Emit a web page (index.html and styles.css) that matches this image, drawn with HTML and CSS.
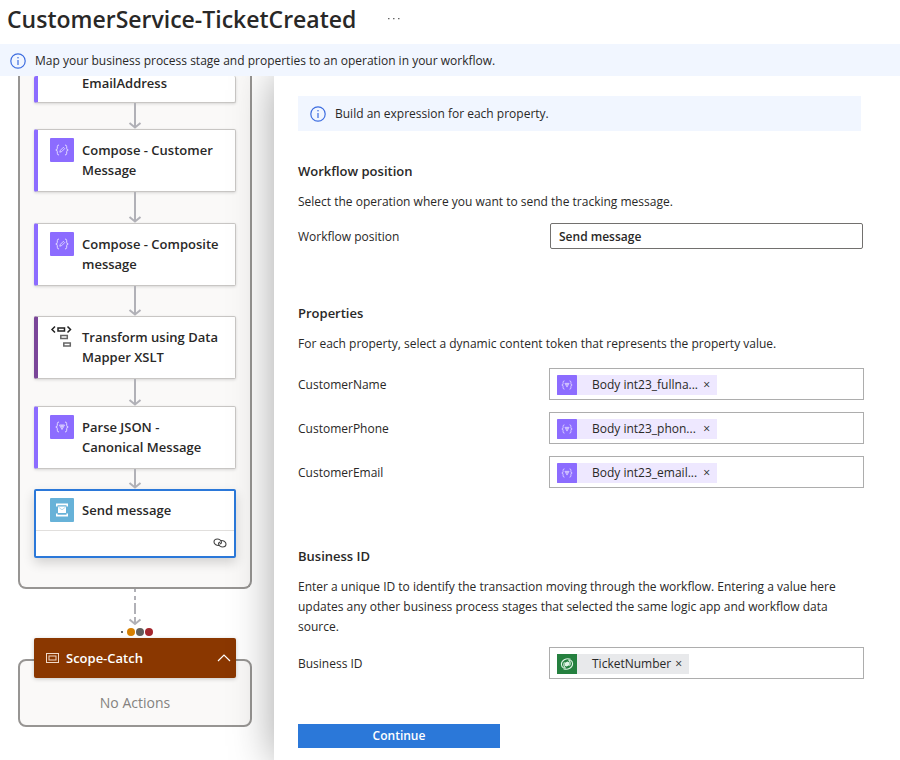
FILE: index.html
```html
<!DOCTYPE html>
<html lang="en">
<head>
<meta charset="utf-8">
<title>CustomerService-TicketCreated</title>
<link rel="stylesheet" href="styles.css">
</head>
<body>
<svg class="defs" aria-hidden="true">
  <symbol id="info" viewBox="0 0 16 16"><circle cx="8" cy="8" r="7.2" fill="none" stroke="#3d6de0" stroke-width="1.2"/><path d="M8 7v5" stroke="#3d6de0" stroke-width="1.2"/><circle cx="8" cy="4.8" r=".8" fill="#3d6de0"/></symbol>
  <symbol id="compose" viewBox="0 0 24 24"><rect width="24" height="24" rx="1" fill="#8c6cff"/><path d="M9 7q-1.700 0-1.700 1.700v1.600q0 1.700-1.500 1.700 1.500 0 1.500 1.700v1.600q0 1.700 1.700 1.700M15 7q1.700 0 1.700 1.700v1.600q0 1.700 1.500 1.700-1.500 0-1.500 1.700v1.600q0 1.700-1.700 1.700" fill="none" stroke="#ebe5ff" stroke-width=".9"/><path d="M9.800 14.200l.6-1.900 3-3 1.300 1.300-3 3z" fill="none" stroke="#ebe5ff" stroke-width=".8"/></symbol>
  <symbol id="parse" viewBox="0 0 24 24"><rect width="24" height="24" rx="1" fill="#8c6cff"/><path d="M9 7q-1.700 0-1.700 1.700v1.600q0 1.700-1.500 1.700 1.500 0 1.500 1.700v1.600q0 1.700 1.700 1.700M15 7q1.700 0 1.700 1.700v1.600q0 1.700 1.500 1.700-1.500 0-1.500 1.700v1.600q0 1.700-1.700 1.700" fill="none" stroke="#ebe5ff" stroke-width=".9"/><path d="M9.500 10h5L12 14.500zM11 10l1 2.500 1-2.500" fill="none" stroke="#ebe5ff" stroke-width=".8"/></symbol>
</svg>

<header class="page-header">
  <h1>CustomerService-TicketCreated</h1>
  <button class="more" type="button" aria-label="More"><svg width="12" height="2" viewBox="0 0 12 2"><path d="M0 .5h1.500M5 .5h1.500M10 .5h1.500" stroke="#666" stroke-width="1.300"/></svg></button>
</header>
<div class="banner">
  <svg width="16" height="16"><use href="#info"/></svg>
  <span>Map your business process stage and properties to an operation in your workflow.</span>
</div>

<div class="workspace">
  <section class="canvas">
    <div class="scope">
      <div class="card card-cut"><h3>EmailAddress</h3></div>
      <svg class="edge" width="14" height="26" viewBox="0 0 14 26"><path d="M7 0v24M1.500 20l5.500 4.500 5.500-4.500"/></svg>
      <div class="card"><svg width="24" height="24"><use href="#compose"/></svg><h3>Compose - Customer Message</h3></div>
      <svg class="edge" width="14" height="31" viewBox="0 0 14 31"><path d="M7 0v29M1.500 25l5.500 4.500 5.500-4.500"/></svg>
      <div class="card"><svg width="24" height="24"><use href="#compose"/></svg><h3>Compose - Composite message</h3></div>
      <svg class="edge" width="14" height="30" viewBox="0 0 14 30"><path d="M7 0v28M1.500 24l5.500 4.500 5.500-4.500"/></svg>
      <div class="card card-mapper">
        <svg width="24" height="24" viewBox="0 0 24 24" fill="none" stroke-width="1.500"><path d="M5 1.500L2 4.500l3 3M17.500 1.500l3 3-3 3" stroke="#222"/><rect x="8" y="3" width="6.500" height="3" stroke="#222"/><rect x="10.800" y="10.500" width="6.500" height="3" stroke="#666"/><rect x="13.800" y="18" width="6.500" height="3" stroke="#666"/></svg>
        <h3>Transform using Data Mapper XSLT</h3>
      </div>
      <svg class="edge" width="14" height="27" viewBox="0 0 14 27"><path d="M7 0v25M1.500 21l5.500 4.500 5.500-4.500"/></svg>
      <div class="card"><svg width="24" height="24"><use href="#parse"/></svg><h3>Parse JSON - Canonical Message</h3></div>
      <svg class="edge" width="14" height="20" viewBox="0 0 14 20"><path d="M7 0v18M1.500 14l5.500 4.500 5.500-4.500"/></svg>
      <div class="card card-selected">
        <div class="card-main">
          <svg width="24" height="24" viewBox="0 0 24 24"><rect width="24" height="24" rx="1" fill="#67b2d8"/><path d="M6 5.500h12v3h-1.500V7.200h-9v1.300H6zM6 18.500h12v-3h-1.500v1.300h-9v-1.300H6z" fill="#fff"/><rect x="8" y="8.500" width="8" height="6.500" rx=".5" fill="#fff"/><path d="M8.500 9.200l3.500 2.600 3.500-2.600" fill="none" stroke="#9fcde6" stroke-width=".8"/></svg>
          <h3>Send message</h3>
        </div>
        <div class="card-foot">
          <svg width="14" height="10" viewBox="0 0 14 10" fill="none" stroke="#444" stroke-width="1.100"><path d="M6.500 7.300C4 8 1 6.200 1 4s2-3 3.500-3 4 1.200 4 3.200c0 .9-.7 1.700-1.800 1.700"/><path d="M7.500 2.700C10 2 13 3.800 13 6s-2 3-3.500 3-4-1.200-4-3.200c0-.9.700-1.700 1.800-1.700"/></svg>
        </div>
      </div>
    </div>
    <svg class="edge" width="14" height="37" viewBox="0 0 14 37"><path d="M7 0v3M7 7v4M7 14v11M7 28v6M1.500 30.500l5.500 4.500 5.500-4.500"/></svg>
    <div class="dots"><i class="tiny"></i><i class="amber"></i><i class="gray"></i><i class="red"></i></div>
    <div class="catch">
      <div class="catch-head">
        <svg width="13" height="10" viewBox="0 0 13 10" fill="none" stroke="#f0d8c8"><rect x=".5" y=".5" width="12" height="9"/><rect x="3" y="3" width="7" height="4"/></svg>
        <h3>Scope-Catch</h3>
        <button type="button" aria-label="Collapse"><svg width="14" height="8" viewBox="0 0 14 8"><path d="M1 7l6-6 6 6" fill="none" stroke="#fff" stroke-width="1.200"/></svg></button>
      </div>
      <p>No Actions</p>
    </div>
  </section>

  <form class="panel">
    <div class="hint"><svg width="16" height="16"><use href="#info"/></svg><span>Build an expression for each property.</span></div>

    <section class="group group-position">
      <h2>Workflow position</h2>
      <p>Select the operation where you want to send the tracking message.</p>
      <div class="row">
        <label for="position">Workflow position</label>
        <input class="text" id="position" type="text" value="Send message">
      </div>
    </section>

    <section class="group group-properties">
      <h2>Properties</h2>
      <p>For each property, select a dynamic content token that represents the property value.</p>
      <div class="row">
        <label for="name">CustomerName</label>
        <div class="tokens"><span class="token"><svg width="20" height="20"><use href="#parse"/></svg><span class="token-name">Body int23_fullna...</span><button type="button" aria-label="Remove">×</button></span><input id="name" type="text"></div>
      </div>
      <div class="row">
        <label for="phone">CustomerPhone</label>
        <div class="tokens"><span class="token"><svg width="20" height="20"><use href="#parse"/></svg><span class="token-name">Body int23_phon...</span><button type="button" aria-label="Remove">×</button></span><input id="phone" type="text"></div>
      </div>
      <div class="row">
        <label for="email">CustomerEmail</label>
        <div class="tokens"><span class="token"><svg width="20" height="20"><use href="#parse"/></svg><span class="token-name">Body int23_email...</span><button type="button" aria-label="Remove">×</button></span><input id="email" type="text"></div>
      </div>
    </section>

    <section class="group group-business">
      <h2>Business ID</h2>
      <p>Enter a unique ID to identify the transaction moving through the workflow. Entering a value here updates any other business process stages that selected the same logic app and workflow data source.</p>
      <div class="row">
        <label for="business">Business ID</label>
        <div class="tokens"><span class="token token-gray"><svg width="20" height="20" viewBox="0 0 20 20"><rect width="20" height="20" fill="#25803f"/><g fill="none" stroke="#dff3e4" stroke-width="1.100"><path d="M13.500 5.300C9 3.600 4.400 6.600 4.400 10.300c0 1.900.9 3 2.300 3.700"/><path d="M6.500 14.700c4.500 1.700 9.100-1.300 9.100-5 0-1.900-.9-3-2.300-3.700"/><path d="M8.500 14.200C6.700 13 6.300 10.200 7.500 8.400M11.500 5.800c1.800 1.200 2.200 4 1 5.800"/></g><path d="M8 8.800l2.500-1.200 2 .8-.4 2.800-2.500 1.300-1.900-.8z" fill="#dff3e4"/></svg><span class="token-name">TicketNumber</span><button type="button" aria-label="Remove">×</button></span><input id="business" type="text"></div>
      </div>
    </section>

    <button class="continue" type="submit">Continue</button>
  </form>
</div>
</body>
</html>
```
FILE: styles.css
```css
* { box-sizing: border-box; }

body {
  margin: 0;
  min-height: 100vh;
  display: flex;
  flex-direction: column;
  background: #fff;
  color: #292827;
  font: 12px/20px "Open Sans", "Noto Sans", sans-serif;
}

h1, h2, h3, p { margin: 0; }
svg { display: block; flex: none; }
button, input { font: inherit; color: inherit; }
button { padding: 0; border: 0; background: none; }
input { min-width: 0; padding: 0; border: 0; outline: 0; background: none; }

.defs { position: absolute; width: 0; height: 0; }

.page-header {
  display: flex;
  align-items: center;
  gap: 32px;
  height: 44px;
  padding: 0 7px 6px;
}
h1 { font-size: 23px; line-height: 32px; font-weight: 600; }

.banner {
  display: flex;
  align-items: center;
  gap: 9px;
  height: 32px;
  padding: 2px 10px 0;
  background: #f1f6ff;
}

.workspace { flex: 1; display: flex; overflow: hidden; }

.canvas {
  width: 274px;
  padding: 0 22px 0 18px;
  display: flex;
  flex-direction: column;
}
.scope {
  padding: 0 14px 29px;
  background: #faf9f8;
  border: 2px solid #979593;
  border-top: 0;
  border-radius: 0 0 8px 8px;
}
h3 { font-size: 13px; line-height: 20px; font-weight: 600; }

.card {
  display: flex;
  gap: 8px;
  min-height: 63px;
  padding: 10px 14px 10px 12px;
  background: #fff;
  border: 1px solid #c8c6c4;
  border-left: 4px solid #8c6cff;
  border-radius: 2px;
  box-shadow: 0 1px 3px rgba(0, 0, 0, .14);
}
.card svg { margin-top: -2px; }
.card-cut { min-height: 0; padding: 0 0 12px 44px; border-top: 0; }
.card-cut h3 { line-height: 14px; }
.card-mapper { border-left-color: #7a4699; }
.card-selected {
  display: block;
  padding: 0;
  border: 2px solid #2b78d9;
  box-shadow: 0 5px 12px rgba(0, 0, 0, .16);
}
.card-main {
  display: flex;
  gap: 8px;
  height: 40px;
  padding: 9px 14px;
  border-bottom: 1px solid #e1dfdd;
}
.card-foot { display: flex; justify-content: flex-end; height: 25px; padding: 9px 7px 0; }

.edge {
  margin: 0 auto;
  fill: none;
  stroke: #b1b1b7;
  stroke-width: 2;
}

.dots { display: flex; align-items: center; justify-content: center; gap: 1px; height: 11px; padding-left: 4px; }
.dots i { width: 8px; height: 8px; border-radius: 50%; }
.dots .tiny { width: 2px; height: 2px; margin-right: 3px; background: #333; }
.dots .amber { background: #d67f00; }
.dots .gray { background: #605e5c; }
.dots .red { background: #a4262c; }

.catch {
  margin-top: 22px;
  padding: 0 14px;
  height: 68px;
  background: #faf9f8;
  border: 2px solid #979593;
  border-radius: 8px;
}
.catch-head {
  display: flex;
  align-items: center;
  gap: 7px;
  height: 40px;
  margin-top: -23px;
  padding: 0 5px 0 12px;
  background: #8a3700;
  border-radius: 2px;
  color: #fff;
  box-shadow: 0 1px 4px rgba(0, 0, 0, .2);
}
.catch-head button { margin-left: auto; }
.catch p { margin-top: 15px; text-align: center; font-size: 14px; color: #84827f; }

.panel {
  flex: 1;
  min-width: 0;
  padding: 20px 36px 12px 24px;
  background: #fff;
  box-shadow: 0 0 40px rgba(0, 0, 0, .36);
}
.hint {
  display: flex;
  align-items: center;
  gap: 9px;
  height: 35px;
  margin: 0 3px 30px 0;
  padding: 0 12px;
  background: #f1f6ff;
}
h2 { margin-bottom: 11px; font-size: 13px; line-height: 20px; font-weight: 600; }

.row { display: grid; grid-template-columns: 251px minmax(0, 1fr); align-items: center; }
.row label { padding-top: 1px; }
.text {
  height: 26px;
  margin: 0 1px;
  padding: 0 8px;
  border: 1px solid #72706e;
  border-radius: 2px;
  font-weight: 600;
}
.tokens {
  display: flex;
  align-items: center;
  height: 32px;
  padding: 2px 7px 0;
  border: 1px solid #adadad;
}
.tokens input { flex: 1; }
.token { display: flex; align-items: center; height: 20px; min-width: 160px; background: #eee8ff; }
.token-gray { min-width: 0; background: #e8e9eb; }
.token-name { margin: 0 4px 0 15px; }
.token button { margin-left: auto; margin-right: 7px; line-height: 20px; }

.group-position .row { margin-top: 11px; }
.group-properties { margin-top: 54px; }
.group-properties p { margin-bottom: 14px; }
.group-properties .row + .row { margin-top: 12px; }
.group-business { margin-top: 58px; }
.group-business .row { margin-top: 10px; }

.continue {
  display: block;
  width: 202px;
  height: 24px;
  margin-top: 45px;
  background: #2b78d9;
  color: #fff;
  font-weight: 600;
}
```
